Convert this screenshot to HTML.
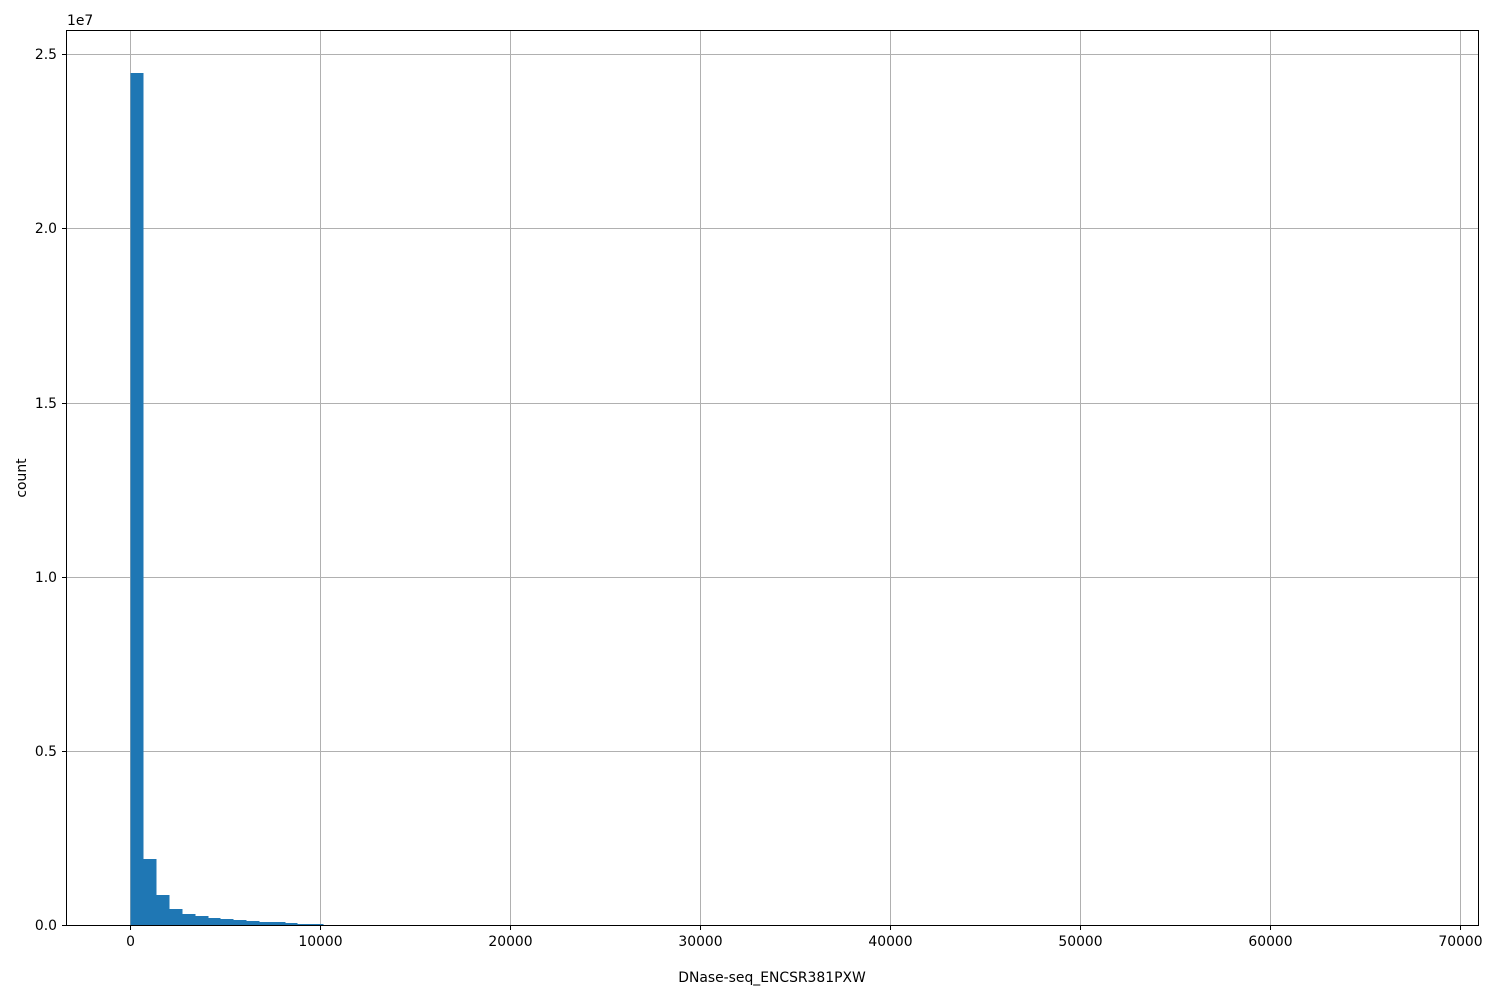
<!DOCTYPE html>
<html><head><style>body{margin:0;background:#fff}</style></head><body>
<svg width="1500" height="1000" xmlns="http://www.w3.org/2000/svg" font-family="DejaVu Sans, Liberation Sans, sans-serif" font-size="13.9">
<g stroke="#b0b0b0" stroke-width="1">
<line x1="130.5" y1="30.5" x2="130.5" y2="925.5"/><line x1="320.5" y1="30.5" x2="320.5" y2="925.5"/><line x1="510.5" y1="30.5" x2="510.5" y2="925.5"/><line x1="700.5" y1="30.5" x2="700.5" y2="925.5"/><line x1="890.5" y1="30.5" x2="890.5" y2="925.5"/><line x1="1080.5" y1="30.5" x2="1080.5" y2="925.5"/><line x1="1270.5" y1="30.5" x2="1270.5" y2="925.5"/><line x1="1460.5" y1="30.5" x2="1460.5" y2="925.5"/>
<line x1="66.5" y1="54.5" x2="1478.5" y2="54.5"/><line x1="66.5" y1="228.5" x2="1478.5" y2="228.5"/><line x1="66.5" y1="403.5" x2="1478.5" y2="403.5"/><line x1="66.5" y1="577.5" x2="1478.5" y2="577.5"/><line x1="66.5" y1="751.5" x2="1478.5" y2="751.5"/>
</g>
<g fill="#1f77b4">
<rect x="130.5" y="73" width="13" height="852.5"/>
<rect x="143.5" y="859" width="13" height="66.5"/>
<rect x="156.5" y="895" width="13" height="30.5"/>
<rect x="169.5" y="909" width="13" height="16.5"/>
<rect x="182.5" y="914" width="13" height="11.5"/>
<rect x="195.5" y="916" width="13" height="9.5"/>
<rect x="208.5" y="918" width="12" height="7.5"/>
<rect x="220.5" y="919" width="13" height="6.5"/>
<rect x="233.5" y="920" width="13" height="5.5"/>
<rect x="246.5" y="921" width="13" height="4.5"/>
<rect x="259.5" y="922" width="13" height="3.5"/>
<rect x="272.5" y="922" width="13" height="3.5"/>
<rect x="285.5" y="923" width="12" height="2.5"/>
<rect x="297.5" y="924" width="13" height="1.5"/>
<rect x="310.5" y="924" width="13" height="1.5"/>
</g>
<rect x="66.5" y="30.5" width="1412" height="895" fill="none" stroke="#000" stroke-width="1"/>
<g stroke="#000">
<line x1="130.5" y1="925.5" x2="130.5" y2="930"/><line x1="320.5" y1="925.5" x2="320.5" y2="930"/><line x1="510.5" y1="925.5" x2="510.5" y2="930"/><line x1="700.5" y1="925.5" x2="700.5" y2="930"/><line x1="890.5" y1="925.5" x2="890.5" y2="930"/><line x1="1080.5" y1="925.5" x2="1080.5" y2="930"/><line x1="1270.5" y1="925.5" x2="1270.5" y2="930"/><line x1="1460.5" y1="925.5" x2="1460.5" y2="930"/>
<line x1="62" y1="54.5" x2="66.5" y2="54.5"/><line x1="62" y1="228.5" x2="66.5" y2="228.5"/><line x1="62" y1="403.5" x2="66.5" y2="403.5"/><line x1="62" y1="577.5" x2="66.5" y2="577.5"/><line x1="62" y1="751.5" x2="66.5" y2="751.5"/><line x1="62" y1="925.5" x2="66.5" y2="925.5"/>
</g>
<g text-anchor="middle" fill="#000">
<text x="130.5" y="946">0</text><text x="320.5" y="946">10000</text><text x="510.5" y="946">20000</text><text x="700.5" y="946">30000</text><text x="890.5" y="946">40000</text><text x="1080.5" y="946">50000</text><text x="1270.5" y="946">60000</text><text x="1460.5" y="946">70000</text>
<text x="772" y="982">DNase-seq_ENCSR381PXW</text>
</g>
<g text-anchor="end" fill="#000">
<text x="57" y="59">2.5</text><text x="57" y="233">2.0</text><text x="57" y="408">1.5</text><text x="57" y="582">1.0</text><text x="57" y="756">0.5</text><text x="57" y="930">0.0</text>
</g>
<text x="67" y="25" fill="#000">1e7</text>
<text transform="translate(26,478) rotate(-90)" text-anchor="middle" fill="#000">count</text>
</svg>
</body></html>
